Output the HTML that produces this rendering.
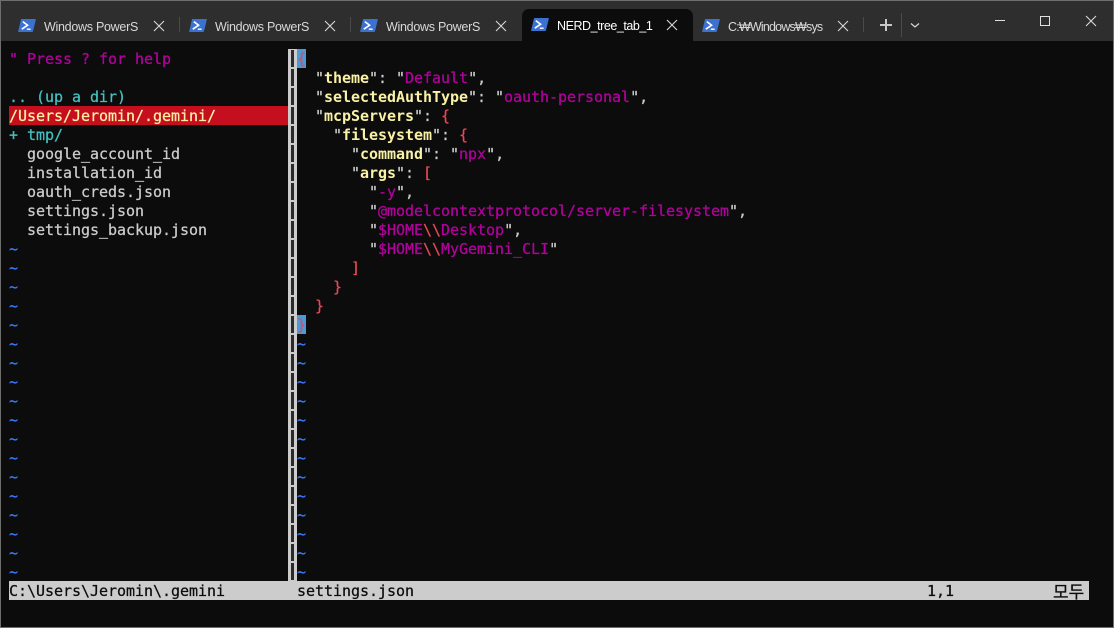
<!DOCTYPE html>
<html><head><meta charset="utf-8">
<style>
html,body{margin:0;padding:0;background:#0c0c0c;}
#w{position:relative;width:1114px;height:628px;overflow:hidden;background:#0c0c0c;}
#bar{position:absolute;left:0;top:0;width:1114px;height:41px;background:#2e2e2e;}
.b{position:absolute;background:#6e6e6e;}
.t{position:absolute;top:20px;font:12.5px/15px "Liberation Sans","Noto Sans CJK KR",sans-serif;letter-spacing:-.28px;color:#d8d8d8;white-space:pre;}
.sep{position:absolute;top:17px;width:1px;height:15px;background:#4a4a4a;}
#active{position:absolute;left:522px;top:9px;width:171px;height:32px;background:#0c0c0c;border-radius:7px 7px 0 0;}
svg{position:absolute;overflow:visible;}
.r{position:absolute;height:19px;margin-top:1px;line-height:19px;font-family:"DejaVu Sans Mono","Noto Sans CJK KR",monospace;font-size:15px;letter-spacing:-0.03px;white-space:pre;color:#cccccc;-webkit-text-stroke:.25px currentColor;}
.m{color:#b4009e}.k{color:#f9f1a5;font-weight:bold;-webkit-text-stroke:0}.s{color:#b4009e}.p{color:#e74856}.c{color:#45c0c0}.g{color:#cccccc}.u{color:#3b78ff}
.hl{position:absolute;background:#c50f1f;}
.cur{position:absolute;width:9px;height:19px;background:#4a9ad8;}
#vs{position:absolute;left:288px;top:49px;width:9px;height:532px;background:#cccccc;}
.vb{position:absolute;left:3px;width:3px;height:17px;background:#2a2a2a;}
#st{position:absolute;left:9px;top:581px;width:1080px;height:19px;background:#cccccc;}
</style></head><body>
<div id="w">
<div id="bar"></div>
<div id="active"></div>
<div class="b" style="left:0;top:0;width:1114px;height:1px"></div>
<div class="b" style="left:0;top:0;width:1px;height:628px"></div>
<div class="b" style="left:1113px;top:0;width:1px;height:628px"></div>
<div class="b" style="left:0;top:627px;width:1114px;height:1px"></div>

<svg width="0" height="0" style="left:0;top:0">
<defs>
<g id="ps">
<path d="M3.6 0H17.4Q18 0 17.8 .7L15 12.3Q14.8 13 14 13H.6Q0 13 .2 12.3L2.9.7Q3 0 3.6 0Z" fill="#3b72d0"/>
<path d="M4.8 2.6L9.6 6.2L3.8 10.2" fill="none" stroke="#fff" stroke-width="1.6"/>
<path d="M8.8 10.2H12.6" fill="none" stroke="#fff" stroke-width="1.4"/>
</g>
<path id="x" d="M0 0L10 10M10 0L0 10" fill="none" stroke="#d8d8d8" stroke-width="1.1"/>
</defs>
</svg>

<svg style="left:18px;top:19px" width="18" height="13"><use href="#ps"/></svg>
<div class="t" style="left:44px">Windows PowerS</div>
<svg style="left:154px;top:21px" width="10" height="10"><use href="#x"/></svg>
<div class="sep" style="left:179px"></div>
<svg style="left:189px;top:19px" width="18" height="13"><use href="#ps"/></svg>
<div class="t" style="left:215px">Windows PowerS</div>
<svg style="left:325px;top:21px" width="10" height="10"><use href="#x"/></svg>
<div class="sep" style="left:350px"></div>
<svg style="left:360px;top:19px" width="18" height="13"><use href="#ps"/></svg>
<div class="t" style="left:386px">Windows PowerS</div>
<svg style="left:496px;top:21px" width="10" height="10"><use href="#x"/></svg>
<svg style="left:531px;top:18px" width="18" height="13"><use href="#ps"/></svg>
<div class="t" style="left:557px;top:19px;color:#fff;letter-spacing:-.45px">NERD_tree_tab_1</div>
<svg style="left:667px;top:20px" width="10" height="10"><use href="#x"/></svg>
<svg style="left:702px;top:19px" width="18" height="13"><use href="#ps"/></svg>
<div class="t" style="left:728px;letter-spacing:-.8px">C:₩Windows₩sys</div>
<svg style="left:838px;top:21px" width="10" height="10"><use href="#x"/></svg>
<div class="sep" style="left:863px"></div>
<svg style="left:880px;top:19px" width="12" height="12"><path d="M0 6H12M6 0V12" fill="none" stroke="#c8c8c8" stroke-width="2"/></svg>
<div class="sep" style="left:901px;top:13px;height:24px"></div>
<svg style="left:911px;top:23px" width="8" height="5"><path d="M0 .5L4 4L8 .5" fill="none" stroke="#d8d8d8" stroke-width="1.2"/></svg>
<svg style="left:995px;top:20px" width="10" height="1"><path d="M0 .5H10" stroke="#e0e0e0" stroke-width="1"/></svg>
<svg style="left:1040px;top:16px" width="10" height="10"><path d="M.5 .5H9.5V9.5H.5Z" fill="none" stroke="#e0e0e0" stroke-width="1"/></svg>
<svg style="left:1086px;top:16px" width="10" height="10"><path d="M0 0L10 10M10 0L0 10" fill="none" stroke="#e0e0e0" stroke-width="1"/></svg>

<div class="hl" style="left:9px;top:106px;width:279px;height:19px"></div>
<div class="r m" style="left:9px;top:49px">" Press ? for help</div>
<div class="r c" style="left:9px;top:87px">.. (up a dir)</div>
<div class="r k" style="left:9px;top:106px;font-weight:normal;-webkit-text-stroke:.25px #f9f1a5">/Users/Jeromin/.gemini/</div>
<div class="r c" style="left:9px;top:125px">+ tmp/</div>
<div class="r" style="left:27px;top:144px">google_account_id</div>
<div class="r" style="left:27px;top:163px">installation_id</div>
<div class="r" style="left:27px;top:182px">oauth_creds.json</div>
<div class="r" style="left:27px;top:201px">settings.json</div>
<div class="r" style="left:27px;top:220px">settings_backup.json</div>
<div class="r u" style="left:9px;top:239px">~</div>
<div class="r u" style="left:9px;top:258px">~</div>
<div class="r u" style="left:9px;top:277px">~</div>
<div class="r u" style="left:9px;top:296px">~</div>
<div class="r u" style="left:9px;top:315px">~</div>
<div class="r u" style="left:9px;top:334px">~</div>
<div class="r u" style="left:9px;top:353px">~</div>
<div class="r u" style="left:9px;top:372px">~</div>
<div class="r u" style="left:9px;top:391px">~</div>
<div class="r u" style="left:9px;top:410px">~</div>
<div class="r u" style="left:9px;top:429px">~</div>
<div class="r u" style="left:9px;top:448px">~</div>
<div class="r u" style="left:9px;top:467px">~</div>
<div class="r u" style="left:9px;top:486px">~</div>
<div class="r u" style="left:9px;top:505px">~</div>
<div class="r u" style="left:9px;top:524px">~</div>
<div class="r u" style="left:9px;top:543px">~</div>
<div class="r u" style="left:9px;top:562px">~</div>

<div id="vs">
<div class="vb" style="top:1px"></div><div class="vb" style="top:20px"></div><div class="vb" style="top:39px"></div><div class="vb" style="top:58px"></div><div class="vb" style="top:77px"></div><div class="vb" style="top:96px"></div><div class="vb" style="top:115px"></div><div class="vb" style="top:134px"></div><div class="vb" style="top:153px"></div><div class="vb" style="top:172px"></div><div class="vb" style="top:191px"></div><div class="vb" style="top:210px"></div><div class="vb" style="top:229px"></div><div class="vb" style="top:248px"></div><div class="vb" style="top:267px"></div><div class="vb" style="top:286px"></div><div class="vb" style="top:305px"></div><div class="vb" style="top:324px"></div><div class="vb" style="top:343px"></div><div class="vb" style="top:362px"></div><div class="vb" style="top:381px"></div><div class="vb" style="top:400px"></div><div class="vb" style="top:419px"></div><div class="vb" style="top:438px"></div><div class="vb" style="top:457px"></div><div class="vb" style="top:476px"></div><div class="vb" style="top:495px"></div><div class="vb" style="top:514px"></div>
</div>

<div class="cur" style="left:297px;top:49px"></div>
<div class="cur" style="left:297px;top:315px"></div>
<div class="r p" style="left:297px;top:49px">{</div>
<div class="r" style="left:315px;top:68px"><span class="g">"</span><span class="k">theme</span><span class="g">": "</span><span class="s">Default</span><span class="g">",</span></div>
<div class="r" style="left:315px;top:87px"><span class="g">"</span><span class="k">selectedAuthType</span><span class="g">": "</span><span class="s">oauth-personal</span><span class="g">",</span></div>
<div class="r" style="left:315px;top:106px"><span class="g">"</span><span class="k">mcpServers</span><span class="g">": </span><span class="p">{</span></div>
<div class="r" style="left:333px;top:125px"><span class="g">"</span><span class="k">filesystem</span><span class="g">": </span><span class="p">{</span></div>
<div class="r" style="left:351px;top:144px"><span class="g">"</span><span class="k">command</span><span class="g">": "</span><span class="s">npx</span><span class="g">",</span></div>
<div class="r" style="left:351px;top:163px"><span class="g">"</span><span class="k">args</span><span class="g">": </span><span class="p">[</span></div>
<div class="r" style="left:369px;top:182px"><span class="g">"</span><span class="s">-y</span><span class="g">",</span></div>
<div class="r" style="left:369px;top:201px"><span class="g">"</span><span class="s">@modelcontextprotocol/server-filesystem</span><span class="g">",</span></div>
<div class="r" style="left:369px;top:220px"><span class="g">"</span><span class="s">$HOME</span><span class="p">\\</span><span class="s">Desktop</span><span class="g">",</span></div>
<div class="r" style="left:369px;top:239px"><span class="g">"</span><span class="s">$HOME</span><span class="p">\\</span><span class="s">MyGemini_CLI</span><span class="g">"</span></div>
<div class="r p" style="left:351px;top:258px">]</div>
<div class="r p" style="left:333px;top:277px">}</div>
<div class="r p" style="left:315px;top:296px">}</div>
<div class="r p" style="left:297px;top:315px">}</div>
<div class="r u" style="left:297px;top:334px">~</div>
<div class="r u" style="left:297px;top:353px">~</div>
<div class="r u" style="left:297px;top:372px">~</div>
<div class="r u" style="left:297px;top:391px">~</div>
<div class="r u" style="left:297px;top:410px">~</div>
<div class="r u" style="left:297px;top:429px">~</div>
<div class="r u" style="left:297px;top:448px">~</div>
<div class="r u" style="left:297px;top:467px">~</div>
<div class="r u" style="left:297px;top:486px">~</div>
<div class="r u" style="left:297px;top:505px">~</div>
<div class="r u" style="left:297px;top:524px">~</div>
<div class="r u" style="left:297px;top:543px">~</div>
<div class="r u" style="left:297px;top:562px">~</div>

<div id="st"></div>
<div class="r" style="left:9px;top:581px;color:#0c0c0c">C:\Users\Jeromin\.gemini</div>
<div class="r" style="left:297px;top:581px;color:#0c0c0c">settings.json</div>
<div class="r" style="left:927px;top:581px;color:#0c0c0c">1,1</div>
<div class="r" style="left:1053px;top:580px;color:#0c0c0c;font-family:'Noto Sans CJK KR',sans-serif;font-size:17px;letter-spacing:0">모두</div>
</div>
</body></html>
